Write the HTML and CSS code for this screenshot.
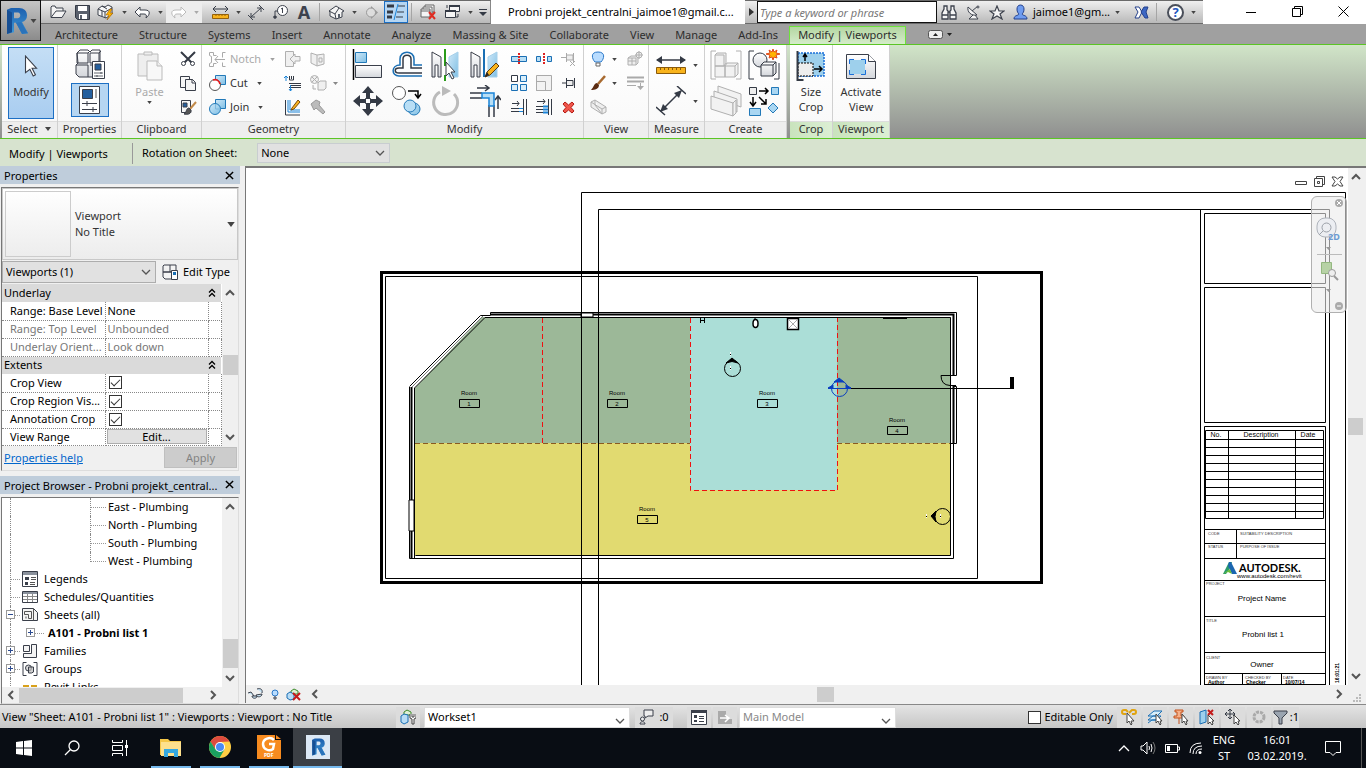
FILE: index.html
```html
<!DOCTYPE html>
<html lang="en">
<head>
    <meta charset="UTF-8">
    <meta name="viewport" content="width=device-width, initial-scale=1.0">
    <title>Probni projekt_centralni</title>
    <link rel="stylesheet" href="styles.css">
</head>
<body>
    <svg class="defs" aria-hidden="true">
        <linearGradient id="blue" x1="0" y1="0" x2="1" y2="1"><stop offset="0" stop-color="#cfe8f8"/><stop offset="1" stop-color="#7fbfe4"/></linearGradient>
        <linearGradient id="grey" x1="0" y1="0" x2="0" y2="1"><stop offset="0" stop-color="#fff"/><stop offset="1" stop-color="#d4d7dc"/></linearGradient>
        <linearGradient id="rlogo" x1="0" y1="0" x2="0" y2="1"><stop offset="0" stop-color="#1c5fae"/><stop offset="1" stop-color="#3f9ad8"/></linearGradient>
        <symbol id="caret" viewBox="0 0 6 4"><path d="M0 0h6L3 4z" fill="#444"/></symbol>
        <symbol id="chev" viewBox="0 0 10 6"><path d="M1 1l4 4 4-4" fill="none" stroke="currentColor" stroke-width="1.3"/></symbol>
        <symbol id="arrow" viewBox="0 0 10 8"><path d="M1 6l4-4 4 4" fill="none" stroke="#555" stroke-width="2"/></symbol>
        <symbol id="cursor" viewBox="0 0 12 20"><path d="M1 1v15l4-3 3 6 2-1-3-6h4z" fill="#fff" stroke="#3a3f4a"/></symbol>
        <symbol id="cross" viewBox="0 0 10 10"><path d="M1 1l8 8M9 1L1 9" stroke="#000" stroke-width="1.6"/></symbol>
        <symbol id="expand" viewBox="0 0 8 10"><path d="M1 4.500l3-3 3 3M1 8.500l3-3 3 3" fill="none" stroke="#000" stroke-width="1.300"/></symbol>
        <symbol id="revit" viewBox="0 0 24 30" preserveAspectRatio="none"><path fill-rule="evenodd" d="M2 3l4-2h8c5 0 8 3 8 8 0 4-2 6-5 7l6 12-6 1-6-12H9v10l-7 2zM9 6v6h4c3 0 3-6 0-6z" fill="url(#rlogo)"/><path d="M2 3l5 3v21l-5 2z" fill="#174f94"/><path d="M11 17l5-1 7 12-6 1z" fill="#2a73bb"/></symbol>
    </svg>

    <header class="header">
        <button class="app-btn" aria-label="Application menu">
            <svg width="24" height="28"><use href="#revit"/></svg>
            <svg width="7" height="4"><use href="#caret"/></svg>
        </button>
        <div class="titlebar">
            <div class="quick-access">
                <button class="qa" aria-label="Open"><svg width="17" height="14" viewBox="0 0 17 14" fill="#f4f4f4" stroke="#3d424d"><path d="M1 12V2l1-1h3l1 2h7v3"/><path d="M1 12.500L6 6h10l-4 6.500z"/></svg></button>
                <button class="qa" aria-label="Save"><svg width="15" height="15" viewBox="0 0 15 15"><path d="M.5.5h14v14h-12l-2-2z" fill="#59606c" stroke="#343a45"/><path d="M3 1h9v5H3zM4 9h8v5H4z" fill="#fff"/><path d="M5 10h2v4H5z" fill="#59606c"/></svg></button>
                <button class="qa" aria-label="Synchronize"><svg width="18" height="17" viewBox="0 0 18 17"><path d="M1 5l4-3 3 1 3-2 4 2v7l-6 4-8-3z" fill="#f6f6f6" stroke="#3d424d"/><path d="M1 5l7 3 7-4M8 8v6M5 2l5 3M5 7v5" stroke="#3d424d" fill="none"/><path d="M13 5l-4 6h3l-2 5 6-7h-3l2-4z" fill="#ffb400" stroke="#9a5a00" stroke-width=".6"/></svg></button>
                <button class="qa-drop" aria-label="Sync options"><svg width="5" height="3"><use href="#caret"/></svg></button>
                <button class="qa" aria-label="Undo"><svg width="17" height="13" viewBox="0 0 17 13"><path d="M6 1L1 6l5 5V8h4c2 0 3 1 2 4 4-3 5-8-1-8H6z" fill="#fff" stroke="#3d424d"/></svg></button>
                <button class="qa-drop" aria-label="Undo list"><svg width="5" height="3"><use href="#caret"/></svg></button>
                <span class="qa-faded">
                    <button class="qa" aria-label="Redo" disabled><svg width="17" height="13" viewBox="0 0 17 13"><path d="M11 1l5 5-5 5V8H7c-2 0-3 1-2 4-4-3-5-8 1-8h5z" fill="#fff" stroke="#bbb"/></svg></button>
                    <button class="qa-drop" aria-label="Redo list" disabled><svg width="5" height="3"><use href="#caret"/></svg></button>
                </span>
                <button class="qa qa-gap" aria-label="Measure"><svg width="17" height="13" viewBox="0 0 17 13"><path d="M1 3h15M4 0L1 3l3 3M13 0l3 3-3 3" stroke="#343a45" fill="none"/><path d="M.5 8.500h16v4H.5z" fill="#f8b31c" stroke="#94610b"/><path d="M4 8v2M7 8v2M10 8v2M13 8v2" stroke="#94610b"/></svg></button>
                <button class="qa-drop" aria-label="Measure options"><svg width="5" height="3"><use href="#caret"/></svg></button>
                <button class="qa" aria-label="Aligned dimension"><svg width="16" height="15" viewBox="0 0 16 15" fill="none" stroke="#3d424d"><path d="M3 12L13 3M3 8v4h4M9 3h4v4M0 10l5 5M11 0l5 5"/></svg></button>
                <button class="qa" aria-label="Tag by category"><svg width="16" height="15" viewBox="0 0 16 15"><circle cx="10.500" cy="5.500" r="5" fill="#fff" stroke="#3d424d"/><path d="M10.500 3v5M9 4l1.500-1M1 12h4M3 14V6h3" stroke="#3d424d" fill="none"/><circle cx="3" cy="12" r="1.500" fill="#3d424d"/></svg></button>
                <button class="qa qa-text" aria-label="Text">A</button>
                <span class="qa-sep"></span>
                <button class="qa" aria-label="Default 3D view"><svg width="17" height="15" viewBox="0 0 17 15"><path d="M1 6l7-5 8 5-2 1v5l-6 2-6-3V7z" fill="#f4f4f4" stroke="#3d424d"/><path d="M1 6l6 3 1 5M7 9l4-6" stroke="#3d424d" fill="none"/><path d="M10 9h2v4h-2z" fill="#59606c"/></svg></button>
                <button class="qa-drop" aria-label="3D options"><svg width="5" height="3"><use href="#caret"/></svg></button>
                <button class="qa" aria-label="Section"><svg width="14" height="13" viewBox="0 0 14 13"><path d="M6 0l7 6.500L6 13z" fill="#999"/><circle cx="6" cy="6.500" r="4.500" fill="#ddd" stroke="#999"/></svg></button>
                <button class="qa qa-on" aria-label="Thin lines"><svg width="18" height="16" viewBox="0 0 18 16"><path d="M0 2h7M0 8h6M0 13h5" stroke="#343a45" stroke-width="3"/><path d="M11 2h7M10 8h7M9 13h7" stroke="#343a45"/><path d="M11 0L7 16" stroke="#1a84d8"/></svg></button>
                <span class="qa-sep"></span>
                <button class="qa" aria-label="Close hidden windows"><svg width="17" height="16" viewBox="0 0 17 16" fill="#f5f5f5" stroke="#666"><path d="M5 1h9v7H5z"/><path d="M3 3h9v7H3z"/><path d="M1 5h9v8H1zM1 7h9"/><path d="M9 8l6 7M15 8l-6 7" stroke="#e02b20" stroke-width="2"/></svg></button>
                <button class="qa" aria-label="Switch windows"><svg width="17" height="16" viewBox="0 0 17 16" fill="#f5f5f5" stroke="#343a45"><path d="M5.500 1.500h10v6h-10z"/><path d="M1.500 6.500h10v7h-10z"/><path d="M5 2h11M1 7h11" stroke-width="2"/><path d="M14 10v3h-2M3 4V1" fill="none"/></svg></button>
                <button class="qa-drop" aria-label="Window list"><svg width="5" height="3"><use href="#caret"/></svg></button>
                <button class="qa-drop qa-more" aria-label="Customize toolbar"><svg width="8" height="7" viewBox="0 0 8 7"><path d="M0 0h8v1H0zM0 3h8L4 7z" fill="#343a45"/></svg></button>
            </div>
            <div class="window-title">Probni projekt_centralni_jaimoe1@gmail.c...</div>
            <div class="infocenter">
                <button class="info-toggle" aria-label="Collapse"><svg width="5" height="8" viewBox="0 0 5 8"><path d="M0 0l5 4-5 4z" fill="#333"/></svg></button>
                <input class="search" type="text" placeholder="Type a keyword or phrase" aria-label="Search">
                <button class="qa" aria-label="Find"><svg width="16" height="15" viewBox="0 0 16 15" fill="#f5f5f5" stroke="#3d424d" stroke-width="1.300"><path d="M3 1h3v4l1 1v8H1V8l2-4zM10 1h3v3l2 4v6H9V6l1-1zM7 7h2M1 10h6M9 10h6"/></svg></button>
                <button class="qa" aria-label="Subscription"><svg width="15" height="15" viewBox="0 0 15 15" fill="#f5f5f5" stroke="#3d424d"><path d="M7 10l-4 4h9l-3-4"/><path d="M2 2c-1 5 3 9 9 8zM6 6l6-5"/><circle cx="12" cy="2" r="1"/></svg></button>
                <button class="qa" aria-label="Favorites"><svg width="16" height="15" viewBox="0 0 16 15"><path d="M8 1l2 5h5l-4 3 2 5-5-3-5 3 2-5-4-3h5z" fill="#f5f5f5" stroke="#3d424d" stroke-width="1.200"/></svg></button>
                <button class="user"><svg width="15" height="16" viewBox="0 0 15 16"><path d="M7.500 1C5 1 4 3 4 5c0 3 1 4 2 5-1 2-5 1-5 5h13c0-4-4-3-5-5 1-1 2-2 2-5 0-2-1-4-3.500-4z" fill="#6f9cf0" stroke="#24418c"/></svg>jaimoe1@gm...<svg width="5" height="3"><use href="#caret"/></svg></button>
                <button class="qa" aria-label="Exchange Apps"><svg width="15" height="13" viewBox="0 0 15 13"><path d="M1 1h4l3 5-3 6H1l3-6z" fill="#fff" stroke="#24418c"/><path d="M14 1h-4L7 6l4 6h3l-2-6z" fill="#3c67c4" stroke="#24418c"/></svg></button>
                <span class="qa-sep"></span>
                <button class="help" aria-label="Help">?</button>
                <button class="qa-drop" aria-label="Help options"><svg width="5" height="3"><use href="#caret"/></svg></button>
            </div>
            <div class="window-btns">
                <button aria-label="Minimize"><svg width="10" height="10" viewBox="0 0 10 10"><path d="M0 5.500h10" stroke="#000"/></svg></button>
                <button aria-label="Restore"><svg width="11" height="11" viewBox="0 0 11 11" fill="none" stroke="#000"><path d="M.5 2.500h8v8h-8zM2.500 2V.5h8v8H9"/></svg></button>
                <button aria-label="Close"><svg width="11" height="11" viewBox="0 0 11 11"><path d="M.5.5l10 10M10.500.5l-10 10" stroke="#000"/></svg></button>
            </div>
        </div>
        <nav class="tabs">
            <a href="#">Architecture</a>
            <a href="#">Structure</a>
            <a href="#">Systems</a>
            <a href="#">Insert</a>
            <a href="#">Annotate</a>
            <a href="#">Analyze</a>
            <a href="#">Massing &amp; Site</a>
            <a href="#">Collaborate</a>
            <a href="#">View</a>
            <a href="#">Manage</a>
            <a href="#">Add-Ins</a>
            <a href="#" class="active">Modify | Viewports</a>
            <button class="ribbon-toggle" aria-label="Minimize ribbon"><svg width="24" height="9" viewBox="0 0 24 9"><rect x=".5" y=".5" width="14" height="8" rx="2" fill="#eee" stroke="#555"/><path d="M5 6l2.500-3L10 6zM19 3h5l-2.500 3z" fill="#222"/></svg></button>
        </nav>
    </header>

    <section class="ribbon">
        <div class="panel w-select">
            <div class="panel-body">
                <button class="big-btn modify-btn"><svg width="14" height="22"><use href="#cursor"/></svg><span>Modify</span></button>
            </div>
            <div class="panel-label">Select <svg width="8" height="4"><use href="#caret"/></svg></div>
        </div>
        <div class="panel w-properties">
            <div class="panel-body col">
                <button class="tool" aria-label="Type properties"><svg width="32" height="32" viewBox="0 0 32 32" stroke="#3a3f4a"><path d="M3 4l3-3h8l2 2 2-2h8v12l-2 2v10l-3 3H5l-3-3V16l2-2z" fill="url(#grey)"/><path d="M2 16h12v12M14 4v10H3V4zM16 4h9v10h-9zM16 16h5M14 4l2-2M25 4l2-2" fill="none"/><path d="M18.500 12.500h12v17h-12z" fill="#fff"/><path d="M21 15h6v6h-6z" fill="#245f9e"/><path d="M20 24h9M20 27h9M27 23v2M23 26v2" stroke-width=".8"/></svg></button>
                <button class="tool tool-on" aria-label="Properties"><svg width="24" height="30" viewBox="0 0 24 30" stroke="#3a3f4a"><path d="M1.500 1.500h20v27h-20z" fill="#fff"/><path d="M4.500 4.500h10v9h-10z" fill="#245f9e"/><path d="M17 4h2v9h-2z" fill="#aaa" stroke="none"/><path d="M4 18.500h15M4 24.500h15M9 16v5M15 22v5"/></svg></button>
            </div>
            <div class="panel-label">Properties</div>
        </div>
        <div class="panel w-clipboard">
            <div class="panel-body">
                <button class="big-btn disabled" disabled><svg width="28" height="32" viewBox="0 0 28 32" fill="#eee" stroke="#bbb"><path d="M2 4h20v22H2z"/><path d="M8 5V2h8v3z"/><path d="M11 11h10l5 5v14H11z" fill="#f8f8f8"/><path d="M21 11v5h5"/></svg><span>Paste</span><svg width="5" height="3"><use href="#caret"/></svg></button>
                <div class="grid-small">
                    <button class="tool" aria-label="Cut to clipboard"><svg width="16" height="16" viewBox="0 0 16 16" stroke="#343a45"><path d="M1 1l11 11M15 1L4 12" stroke-width="2"/><circle cx="3.500" cy="12.500" r="2" fill="#fff"/><circle cx="12.500" cy="12.500" r="2" fill="#fff"/></svg></button>
                    <button class="tool" aria-label="Copy to clipboard"><svg width="16" height="16" viewBox="0 0 16 16" fill="#f6f6f6" stroke="#3a3f4a"><path d="M.5 1.500h9v11h-9z"/><path d="M5.500 4.500h7l3 3v8h-10zM12 4v4h3"/></svg></button>
                    <button class="tool" aria-label="Match type properties"><svg width="17" height="17" viewBox="0 0 17 17" fill="#f6f6f6" stroke="#3a3f4a"><path d="M1.500 1.500h9v12h-9z"/><path d="M3 4h4v4H3z" fill="#245f9e"/><path d="M16 3l-6 7" stroke="#c28a4a" stroke-width="2"/><path d="M4 15c3 1 8 0 7-4l-2-2c-3 0-2 4-5 6z" fill="#555"/></svg></button>
                </div>
            </div>
            <div class="panel-label">Clipboard</div>
        </div>
        <div class="panel w-geometry">
            <div class="panel-body">
                <div class="rows">
                    <button class="row-btn disabled" disabled><svg width="17" height="15" viewBox="0 0 17 15" fill="none" stroke="#aaa"><path d="M.5.5h4v3h3M.5 14.500h4v-3h3M.5.5v3l2 1v6l-2 1v3M16.500.5h-3v5M16.500 14.500h-3v-4M6 7.500h10M9 4L6 7.500 9 11"/></svg>Notch<svg width="5" height="3"><use href="#caret"/></svg></button>
                    <button class="row-btn"><svg width="17" height="16" viewBox="0 0 17 16"><path d="M6.500.5h10v9h-10z" fill="url(#blue)" stroke="#2279b8"/><circle cx="6" cy="10" r="5.500" fill="#fff" stroke="#555"/><path d="M4 5c3-1 6 0 7 4" stroke="#e8191c" stroke-width="1.600" fill="none"/></svg>Cut<svg width="5" height="3"><use href="#caret"/></svg></button>
                    <button class="row-btn"><svg width="17" height="16" viewBox="0 0 17 16" fill="url(#blue)" stroke="#2279b8"><path d="M6.500.5h10v9h-10z"/><circle cx="6" cy="10" r="5.500"/><path d="M6.500 5v5h5" fill="none" stroke="#7fb8dd"/></svg>Join<svg width="5" height="3"><use href="#caret"/></svg></button>
                </div>
                <div class="grid-small">
                    <button class="tool" aria-label="Wall joins" disabled><svg width="17" height="16" viewBox="0 0 17 16" fill="#f0f0f0" stroke="#b0b0b0"><path d="M1.500.5h8v5l-3 3 3 3v4h-8z"/><path d="M16 5.500h-5V3L6 8l5 5v-3h5z"/></svg></button>
                    <button class="tool" aria-label="Beam joins"><svg width="17" height="17" viewBox="0 0 17 17" fill="none" stroke="#343a45"><path d="M5 8.500h12M5 12.500h12M7 10.500h10"/><path d="M5.500 1v4h4V1M7.500 1v3" /><path d="M2 6V1M0 3l2-2 2 2M6.500 10v6M5 14l1.500 2L8 14" stroke="#1a84d8"/></svg></button>
                    <button class="tool" aria-label="Edit joins"><svg width="17" height="17" viewBox="0 0 17 17" fill="none" stroke="#343a45"><path d="M1.500 1v15H16"/><path d="M4 1v12h12M6 1v10h10" stroke="#1a84d8"/><path d="M8 9l6-8 2 2-6 7-3 1z" fill="#f8b31c" stroke="#7a4a0b"/></svg></button>
                </div>
                <div class="grid-small geo-last">
                    <button class="tool" aria-label="Split face" disabled><svg width="15" height="15" viewBox="0 0 15 15" fill="#f0f0f0" stroke="#b0b0b0"><path d="M1 1l6 2 7-1v10l-7 2-6-3zM7 3v11M9 6h3v4H9z"/></svg></button>
                    <button class="tool" aria-label="Paint" disabled><svg width="30" height="16" viewBox="0 0 30 16" fill="#f0f0f0" stroke="#b0b0b0"><circle cx="4.500" cy="4.500" r="4"/><path d="M2 2l5 5M7 2L2 7M8 8l2-2h6v7l-2 2H8zM3 10v4h3"/><path d="M23 7h5l-2.500 3z" fill="#888" stroke="none"/></svg></button>
                    <button class="tool" aria-label="Demolish"><svg width="16" height="16" viewBox="0 0 16 16" fill="#bbb" stroke="#999"><path d="M1 5l5-4 4 2-1 3 6 7-2 2-7-6-2 2z"/></svg></button>
                </div>
            </div>
            <div class="panel-label">Geometry</div>
        </div>
        <div class="panel w-modify">
            <div class="panel-body">
                <div class="grid-big">
                    <button class="tool" aria-label="Align"><svg width="32" height="32" viewBox="0 0 32 32"><path d="M1.500 0v31" stroke="#000" stroke-width="1.500"/><path d="M3.500 3.500h11v10h-11z" fill="url(#blue)" stroke="#2279b8"/><path d="M3.500 16.500h26v12h-26z" fill="url(#grey)" stroke="#3a3f4a"/></svg></button>
                    <button class="tool" aria-label="Offset"><svg width="32" height="32" viewBox="0 0 32 32" fill="none"><path d="M31 16h-8V10c0-9-14-9-14 0v6C0 16 0 27 8 27h23" stroke="#1a6fb4" stroke-width="1.500"/><path d="M31 19h-11V10c0-5-8-5-8 0v9H8c-5 0-5 5 0 5h23" stroke="#343a45" stroke-width="1.500"/></svg></button>
                    <button class="tool" aria-label="Mirror pick axis"><svg width="32" height="32" viewBox="0 0 32 32"><path d="M2 3l9 5v20H8V16H5v12H2z" fill="url(#grey)" stroke="#3a3f4a"/><path d="M28 3l-9 5v20h9z" fill="url(#blue)" stroke="#a6d0ea"/><path d="M15 0v32" stroke="#2a9c1a" stroke-width="2" stroke-dasharray="17 9 6"/><path d="M16 13v14l3-3 3 6 2-1-3-6h4z" fill="#fff" stroke="#3a3f4a"/></svg></button>
                    <button class="tool" aria-label="Mirror draw axis"><svg width="32" height="32" viewBox="0 0 32 32"><path d="M2 3l9 5v20H8V16H5v12H2z" fill="url(#grey)" stroke="#3a3f4a"/><path d="M28 3l-9 5v20h9z" fill="url(#blue)" stroke="#a6d0ea"/><path d="M15 0v28" stroke="#1a6fb4" stroke-width="2"/><path d="M16 28l2-5 9-9 3 3-9 9z" fill="#f8b31c" stroke="#5d3a10"/><path d="M16 28l2-5 2 3z" fill="#222"/></svg></button>
                    <button class="tool" aria-label="Move"><svg width="32" height="32" viewBox="0 0 32 32" fill="#343a45"><path d="M16 1l6 7h-4v5h-4V8h-4zM16 31l6-7h-4v-5h-4v5h-4zM1 16l7-6v4h5v4H8v4zM31 16l-7-6v4h-5v4h5v4z"/><path d="M13.500 13.500h5v5h-5z" fill="#fff" stroke="#343a45"/></svg></button>
                    <button class="tool" aria-label="Copy"><svg width="32" height="32" viewBox="0 0 32 32"><circle cx="8" cy="8" r="6.500" fill="#fff" stroke="#555"/><path d="M17 6h10v6M24 9l3 4 3-4" fill="none" stroke="#000" stroke-width="1.500"/><circle cx="23" cy="24" r="6" fill="url(#blue)" stroke="#2279b8"/><circle cx="19" cy="21" r="6" fill="#b8def5" stroke="#2279b8"/></svg></button>
                    <button class="tool" aria-label="Rotate" disabled><svg width="32" height="32" viewBox="0 0 32 32"><path d="M10 7a12 12 0 1 0 14 2" fill="none" stroke="#bbb" stroke-width="3"/><path d="M12 1l9 5-9 5z" fill="#bbb"/></svg></button>
                    <button class="tool" aria-label="Trim to corner"><svg width="32" height="32" viewBox="0 0 32 32" fill="none" stroke="#343a45" stroke-width="1.500"><path d="M8 3h12M16 0l4 3-4 3M29 24V12M26 15l3-4 3 4M1 8h12M1 13h12M20 20v12M25 20v12"/><path d="M13 8h12v13h-5v-8h-7z" fill="#b8def5" stroke="#1a84d8"/></svg></button>
                </div>
                <div class="grid-three">
                    <button class="tool" aria-label="Split element"><svg width="16" height="12" viewBox="0 0 16 12"><path d="M.5 3.500h15v5H.5z" fill="#b8def5" stroke="#1a6fb4"/><path d="M8 0v12" stroke="#d22" stroke-width="2" stroke-dasharray="2 1"/></svg></button>
                    <button class="tool" aria-label="Split with gap"><svg width="16" height="12" viewBox="0 0 16 12"><path d="M.5 3.500h4v5h-4zM11.500 3.500h4v5h-4z" fill="#b8def5" stroke="#1a6fb4"/><path d="M8 0v12" stroke="#d22" stroke-width="2" stroke-dasharray="2 1"/></svg></button>
                    <button class="tool" aria-label="Unpin" disabled><svg width="16" height="16" viewBox="0 0 16 16" fill="#eee" stroke="#aaa"><path d="M0 6.500h5M5.500 2v9M6 4h6v5H6M12.500 2v9M9 10l5 5M14 10l-5 5"/></svg></button>
                    <button class="tool" aria-label="Array"><svg width="16" height="16" viewBox="0 0 16 16" fill="#d8eefa" stroke="#1a6fb4"><path d="M.5.5h6v6h-6z" fill="#fff" stroke="#343a45"/><path d="M9.500.5h6v6h-6zM.5 9.500h6v6h-6zM9.500 9.500h6v6h-6z"/></svg></button>
                    <button class="tool" aria-label="Scale" disabled><svg width="16" height="16" viewBox="0 0 16 16" fill="#f2f2f2" stroke="#aaa"><path d="M.5.5h15v15h-15zM.5 6.500h9v9h-9z"/></svg></button>
                    <button class="tool" aria-label="Pin"><svg width="14" height="12" viewBox="0 0 14 12" fill="#eee" stroke="#343a45"><path d="M0 6h4M4.500 1v10M5 3.500h6v5H5M12.500 1v10"/></svg></button>
                    <button class="tool" aria-label="Trim single"><svg width="16" height="16" viewBox="0 0 16 16" fill="none" stroke="#343a45"><path d="M1 4.500h7M6 2l2 2.500L6 7M0 9.500h8M0 12.500h8M12.500 0v16M15.500 0v16"/><path d="M8 9.500h4M8 12.500h4" stroke="#1a84d8"/></svg></button>
                    <button class="tool" aria-label="Trim multiple"><svg width="16" height="16" viewBox="0 0 16 16" fill="none" stroke="#343a45"><path d="M1 2.500h8M7 0l2 2.500L7 5M0 7.500h9M0 10.500h9M0 13.500h9M12.500 0v16M15.500 0v16"/><path d="M7 7.500h5M7 10.500h5M7 13.500h5" stroke="#1a84d8" stroke-width="2"/></svg></button>
                    <button class="tool" aria-label="Delete"><svg width="13" height="13" viewBox="0 0 13 13"><path d="M1 3l2-2 3.500 3L10 1l2 2-3 3.500 3 3.500-2 2-3.500-3L3 12l-2-2 3-3.500z" fill="#f0564b" stroke="#b51b14"/></svg></button>
                </div>
            </div>
            <div class="panel-label">Modify</div>
        </div>
        <div class="panel w-view">
            <div class="panel-body">
                <div class="rows icons-only">
                    <button class="row-btn" aria-label="Hide in view"><svg width="16" height="17" viewBox="0 0 16 17"><path d="M8 1C0 1 2 8 5 11h6c3-3 5-10-3-10z" fill="#b8dcff" stroke="#2b78c8"/><path d="M6 12h4v3H6z" fill="#fff" stroke="#666"/></svg><svg width="5" height="3"><use href="#caret"/></svg></button>
                    <button class="row-btn" aria-label="Override graphics"><svg width="16" height="16" viewBox="0 0 16 16"><path d="M15 1L8 9" stroke="#a86a30" stroke-width="2.500"/><path d="M1 15c4 0 8-1 8-5L7 8C4 8 4 12 1 15z" fill="#5b2b12"/></svg><svg width="5" height="3"><use href="#caret"/></svg></button>
                    <button class="row-btn" aria-label="Selection box" disabled><svg width="17" height="16" viewBox="0 0 17 16" fill="#eee" stroke="#b0b0b0"><path d="M1 3l4-2 11 7v5l-4 2L1 8zM1 3l11 7v5M5 1v5l7 9M12 10l4-2"/></svg></button>
                </div>
                <div class="grid-small">
                    <button class="tool" aria-label="Displace" disabled><svg width="16" height="16" viewBox="0 0 16 16" fill="#eee" stroke="#b0b0b0"><path d="M1 7l3-2h7v7l-2 2H1zM1 7h8v7M5 7v7M1 10h8"/><circle cx="12" cy="4" r="3"/><path d="M12 0v8M8 4h8"/></svg></button>
                    <button class="tool" aria-label="Linework" disabled><svg width="17" height="14" viewBox="0 0 17 14" stroke="#aaa"><path d="M0 1.500h17M0 5.500h17" stroke-width="2"/><path d="M0 9.500h9M13.500 7v5"/><path d="M10 10h7l-3.500 4z" fill="#aaa" stroke="none"/></svg></button>
                </div>
            </div>
            <div class="panel-label">View</div>
        </div>
        <div class="panel w-measure">
            <div class="panel-body col">
                <button class="wide-tool" aria-label="Measure between"><svg width="30" height="20" viewBox="0 0 30 20"><path d="M1 5h28" stroke="#343a45" stroke-width="1.500"/><path d="M0 5l6-4v8zM30 5l-6-4v8z" fill="#343a45"/><path d="M.5 12.500h29v6H.5z" fill="#f8b31c" stroke="#8a5a0a"/><path d="M4.500 13v2M8.500 13v2M12.500 13v2M16.500 13v2M20.500 13v2M24.500 13v2" stroke="#8a5a0a"/></svg><svg width="5" height="3"><use href="#caret"/></svg></button>
                <button class="wide-tool" aria-label="Aligned"><svg width="30" height="30" viewBox="0 0 30 30"><path d="M5 25L25 5M0 21l9 8M21 0l9 8" stroke="#343a45" stroke-width="1.500"/><path d="M4 26l3-8 5 5zM26 4l-8 3 5 5z" fill="#343a45"/></svg><svg width="5" height="3"><use href="#caret"/></svg></button>
            </div>
            <div class="panel-label">Measure</div>
        </div>
        <div class="panel w-create">
            <div class="panel-body">
                <div class="grid-create">
                    <button class="tool" aria-label="Create assembly" disabled><svg width="32" height="32" viewBox="0 0 32 32" fill="#f2f2f2" stroke="#b0b0b0"><path d="M6 2H1v28h5M26 2h5v28h-5" fill="none"/><path d="M5 17V6l2-2h9v10l-2 3zM5 17h10v11H5zM15 17l2-3h11v11l-3 3H15zM15 17h10v11M5 6h9v11M25 17l3-3"/></svg></button>
                    <button class="tool" aria-label="Create group"><svg width="32" height="32" viewBox="0 0 32 32" fill="url(#grey)" stroke="#343a45"><path d="M6 2H1v28h5M26 30h5V14" fill="none"/><circle cx="12" cy="11" r="7"/><path d="M13 16l3-3h12v11l-3 3H13zM13 16h12v11M25 16l3-3"/><path d="M25 0l1 3 3-2-1 3 4 1-4 1 1 3-3-1-1 3-1-3-3 1 1-3-4-1 4-1-1-3 3 2z" fill="#ffb400" stroke="#e0491a"/></svg></button>
                    <button class="tool" aria-label="Create parts" disabled><svg width="32" height="32" viewBox="0 0 32 32" fill="#f2f2f2" stroke="#b0b0b0"><path d="M8 1l23 8v13l-23-8z"/><path d="M4 6l23 8v13L4 19z"/><path d="M1 11l22 7v13L1 24z"/><path d="M23 18l3-3v13l-3 3z"/></svg></button>
                    <button class="tool" aria-label="Create similar"><svg width="32" height="32" viewBox="0 0 32 32"><path d="M1.500 2.500h7v7h-7z" fill="#eee" stroke="#343a45"/><path d="M23.500 2.500h7v7h-7zM1.500 23.500h11v7h-11zM25 18l5 5-5 5-5-5z" fill="#a9d6f2" stroke="#2279b8"/><path d="M11 6h9M17 3l3 3-3 3M5 12v8M2 17l3 4 3-4M11 12l7 7M18 14v5h-5" fill="none" stroke="#000" stroke-width="1.500"/></svg></button>
                </div>
            </div>
            <div class="panel-label">Create</div>
        </div>
        <div class="panel w-crop context">
            <div class="panel-body">
                <button class="big-btn"><svg width="30" height="32" viewBox="0 0 30 30"><path d="M2 2h26v23H2z" fill="#9ed0ec" stroke="#1a6fd8" stroke-width="1.500" stroke-dasharray="2 1"/><path d="M2 12h15v13H2z" fill="#eee" stroke="#000" stroke-dasharray="2 1"/><path d="M1.500 0v29h6" stroke="#343a45" stroke-width="2" fill="none"/><path d="M9 10V4M7 6l2-3 2 3M18 18h8M23 15l3 3-3 3" fill="none" stroke="#000" stroke-width="1.500"/></svg><span>Size<br>Crop</span></button>
            </div>
            <div class="panel-label">Crop</div>
        </div>
        <div class="panel w-viewport context">
            <div class="panel-body">
                <button class="big-btn"><svg width="32" height="32" viewBox="0 0 32 30"><path d="M1.500 3.500h22l7 7v17h-29z" fill="url(#grey)" stroke="#3a3f4a"/><path d="M23.500 3.500v7h7" fill="#fff" stroke="#3a3f4a"/><path d="M5 9h15v14H5z" fill="#9ed0ec"/><path d="M4.500 13V8.500H9M16 8.500h4.500V13M20.500 19v4.500H16M9 23.500H4.500V19" fill="none" stroke="#1a6fd8"/></svg><span>Activate<br>View</span></button>
            </div>
            <div class="panel-label">Viewport</div>
        </div>
    </section>

    <section class="options-bar">
        <span class="mode">Modify | Viewports</span>
        <label for="rotation">Rotation on Sheet:</label>
        <span class="combo rotation">
            <select id="rotation"><option>None</option></select>
            <svg width="10" height="6"><use href="#chev"/></svg>
        </span>
    </section>

    <main class="workspace">
        <aside class="side">
            <section class="palette properties">
                <h2 class="palette-title">Properties<button aria-label="Close properties"><svg width="9" height="9"><use href="#cross"/></svg></button></h2>
                <div class="palette-body">
                    <button class="type-selector">
                        <span class="thumb"></span>
                        <span class="type-name">Viewport<br>No Title</span>
                        <svg width="8" height="5"><use href="#caret"/></svg>
                    </button>
                    <div class="filter">
                        <span class="combo">
                            <select aria-label="Properties filter"><option>Viewports (1)</option></select>
                            <svg width="10" height="6"><use href="#chev"/></svg>
                        </span>
                        <button class="edit-type"><svg width="17" height="16" viewBox="0 0 17 16" fill="#f4f4f4" stroke="#3a3f4a"><path d="M1 2l1-1h12v9M1 2v11l2 2h7V8H1M8 1v7M1 8h13"/><path d="M9.500 6.500h6v9h-6z" fill="#fff"/><path d="M11 8h3v3h-3z" fill="#1a6fb4" stroke="none"/></svg>Edit Type</button>
                    </div>
                    <div class="scroll-area">
                        <table class="props">
                            <colgroup><col class="c-name"><col class="c-value"><col class="c-btn"></colgroup>
                            <tr class="group"><th colspan="2">Underlay</th><th><svg width="8" height="10"><use href="#expand"/></svg></th></tr>
                            <tr><td>Range: Base Level</td><td>None</td><td></td></tr>
                            <tr class="dim"><td>Range: Top Level</td><td>Unbounded</td><td></td></tr>
                            <tr class="dim"><td>Underlay Orient...</td><td>Look down</td><td></td></tr>
                            <tr class="group"><th colspan="2">Extents</th><th><svg width="8" height="10"><use href="#expand"/></svg></th></tr>
                            <tr><td><label for="crop-view">Crop View</label></td><td><input type="checkbox" id="crop-view" checked></td><td></td></tr>
                            <tr><td><label for="crop-region">Crop Region Vis...</label></td><td><input type="checkbox" id="crop-region" checked></td><td></td></tr>
                            <tr><td><label for="ann-crop">Annotation Crop</label></td><td><input type="checkbox" id="ann-crop" checked></td><td></td></tr>
                            <tr class="range"><td>View Range</td><td class="with-btn"><button class="edit-btn">Edit...</button></td><td></td></tr>
                        </table>
                        <div class="vscroll">
                            <svg width="10" height="8"><use href="#arrow"/></svg>
                            <span class="vthumb props-thumb"></span>
                            <svg class="flip" width="10" height="8"><use href="#arrow"/></svg>
                        </div>
                    </div>
                    <div class="props-footer">
                        <a href="#">Properties help</a>
                        <button disabled>Apply</button>
                    </div>
                </div>
            </section>

            <section class="palette browser">
                <h2 class="palette-title">Project Browser - Probni projekt_central...<button aria-label="Close browser"><svg width="9" height="9"><use href="#cross"/></svg></button></h2>
                <div class="palette-body">
                    <div class="scroll-area">
                        <ul class="tree">
                            <li class="leaf">East - Plumbing</li>
                            <li class="leaf">North - Plumbing</li>
                            <li class="leaf">South - Plumbing</li>
                            <li class="leaf last">West - Plumbing</li>
                            <li class="top"><i></i><svg width="16" height="16" viewBox="0 0 16 16"><path d="M.5.500h15v15H.5z" fill="#fff" stroke="#3a3f4a"/><path d="M1 1h14v3H1z" fill="#8a919c"/><path d="M3 6h4v3H3zM3 11h3v3H3z" fill="#3a3f4a"/><path d="M9 6.500h5M9 8.500h5M8 11.500h5M8 13.500h5" stroke="#555"/></svg>Legends</li>
                            <li class="top"><i></i><svg width="16" height="12" viewBox="0 0 16 12"><path d="M.5.500h15v11H.5z" fill="#fff" stroke="#3a3f4a"/><path d="M1 1h14v2H1z" fill="#8a919c"/><path d="M1 5.500h14M1 8.500h14M5.500 3v8M10.500 3v8" stroke="#888"/></svg>Schedules/Quantities</li>
                            <li class="top"><i class="minus"></i><svg width="16" height="13" viewBox="0 0 16 13"><path d="M.5.500h11l4 4v8H.5z" fill="#f4f4f4" stroke="#3a3f4a"/><path d="M2.500 3.500h7v7h-3v-4h-4zM4 8.500v2M11.500.500v12" fill="none" stroke="#555"/></svg>Sheets (all)</li>
                            <li class="sheet"><i class="plus"></i>A101 - Probni list 1</li>
                            <li class="top"><i class="plus"></i><svg width="14" height="14" viewBox="0 0 14 14" fill="#f4f4f4" stroke="#3a3f4a"><path d="M.5 1.500h6v6h-6zM8.500.500h5v13H.5v-4h8z"/></svg>Families</li>
                            <li class="top"><i class="plus"></i><svg width="15" height="14" viewBox="0 0 15 14" fill="none" stroke="#3a3f4a"><path d="M4 .5H.5v13H4M11 .5h3.500v13H11"/><circle cx="6" cy="6" r="3" fill="#ddd"/><path d="M6 5h5v5l-2 1H6z" fill="#bbb" fill-opacity=".7"/></svg>Groups</li>
                            <li class="top"><i></i><svg width="14" height="8" viewBox="0 0 14 8" fill="none" stroke="#d9a11b" stroke-width="2"><path d="M1 3h4v4H1zM9 3h4v4H9zM4 5h6"/></svg>Revit Links</li>
                        </ul>
                        <div class="vscroll">
                            <svg width="10" height="8"><use href="#arrow"/></svg>
                            <span class="vthumb tree-thumb"></span>
                            <svg class="flip" width="10" height="8"><use href="#arrow"/></svg>
                        </div>
                    </div>
                    <div class="hscroll">
                        <svg class="left" width="10" height="8"><use href="#arrow"/></svg>
                        <span class="hthumb"></span>
                        <svg class="right" width="10" height="8"><use href="#arrow"/></svg>
                    </div>
                </div>
            </section>
        </aside>

        <section class="view">
            <div class="canvas">
                <svg class="sheet-drawing" viewBox="246 168 1102 517" preserveAspectRatio="xMinYMin slice">
                    <!-- rooms -->
                    <path d="M482 317H951V443H415V388z" fill="#9cb898"/>
                    <path d="M415 443H951V556H415z" fill="#e1da70"/>
                    <path d="M690 317H837V490H690z" fill="#abded7"/>
                    <g class="boundary">
                        <path d="M542.500 318V443M690.500 318V490.500H837.500V318"/>
                        <path d="M415 443.500H690M837 443.500H951" stroke="#8a5a20"/>
                    </g>
                    <!-- walls -->
                    <g class="line">
                        <path d="M490.500 315.500V312.500H956.500V375.500H941M954 386.500H956.500V443.500H951M485 317.500H950.500V555.500H415.500M953.500 443V558.500H409.500V387"/>
                        <path d="M490 315.500H480.500L409.500 386.500M485 317.500L414.500 388V558"/>
                        <path d="M483 316L412 387" stroke="#777"/>
                        <path d="M950.500 385.500H956M941 375.500Q941 385 950 385.500M883 318.500H907"/>
                        <path d="M490 314.500H953.500V375M953.500 386V443M411.500 387V558" stroke-width="2"/>
                    </g>
                    <path d="M581 313h12v4h-12zM409 500h5v31h-5z" fill="#fff" stroke="#000"/>
                    <!-- fixtures -->
                    <g class="line">
                        <path d="M700.500 318v5M704.500 318v5M700 320.500h5M755 318v2"/>
                        <ellipse cx="755.500" cy="323.500" rx="2.500" ry="4" fill="#fff" stroke-width="1.500"/>
                        <path d="M787.500 318.500h11v11h-11z" fill="#fff" stroke-width="1.500"/>
                        <path d="M789 320l8 8M797 320l-8 8" stroke="#aaa"/>
                    </g>
                    <!-- elevation and section marks -->
                    <g class="line">
                        <circle cx="732.500" cy="368.500" r="8"/>
                        <path d="M726 363l6-5 6 5q-6-3-12 0z" fill="#000"/>
                        <circle cx="942.500" cy="516.500" r="8"/>
                        <path d="M936 511l-5 5 5 6q-2-5 0-11z" fill="#000"/>
                        <path d="M850 388.500h163"/>
                        <path d="M1010 377h4v12h-4z" fill="#000" stroke="none"/>
                    </g>
                    <path d="M730.500 352v4M730.500 366v4M926.500 514v4M940.500 514v4" stroke="#fff"/>
                    <path d="M730.500 354v1M730.500 368v1M926.500 516v1M940.500 516v1" stroke="#000"/>
                    <g stroke="#0b3fc0" fill="none">
                        <circle cx="839.500" cy="388.500" r="8"/>
                        <path d="M828 388.500h23"/>
                        <path d="M834 382l5-4 5 4zM828 388l5-3v3zM851 388l-5-3v3z" fill="#0b3fc0"/>
                    </g>
                    <g class="room-tag">
                        <path d="M459.500 399.500h20v8h-20zM607.500 399.500h20v8h-20zM757.500 399.500h20v8h-20zM887.500 426.500h20v8h-20zM637.500 515.500h20v8h-20z"/>
                        <text x="469" y="395">Room</text><text x="469" y="406">1</text>
                        <text x="617" y="395">Room</text><text x="617" y="406">2</text>
                        <text x="767" y="395">Room</text><text x="767" y="406">3</text>
                        <text x="897" y="422">Room</text><text x="897" y="433">4</text>
                        <text x="647" y="511">Room</text><text x="647" y="522">5</text>
                    </g>
                    <!-- crop region -->
                    <path d="M381.500 272.500H1041.500V582.500H381.500z" fill="none" stroke="#000" stroke-width="3"/>
                    <path class="line" d="M385.500 276.500H977.500V578.500H385.500z"/>
                    <!-- sheet frame and title block -->
                    <g class="line">
                        <path d="M581.500 686V192.500H1345.500V686M598.500 686V209.500H1329.500V686M1200.500 209V686"/>
                        <path d="M1204.500 213.500h121v70h-121zM1204.500 287.500h121v135h-121zM1204.500 686V426.500H1325.500V686"/>
                        <path d="M1205.500 430.500h118v88h-118zM1228.500 430v88M1295.500 430v88M1205 439.500h118M1205 447.500h118M1205 455.500h118M1205 463.500h118M1205 471.500h118M1205 479.500h118M1205 487.500h118M1205 495.500h118M1205 503.500h118M1205 511.500h118"/>
                        <path d="M1204 529.500h121M1204 543.500h121M1236.500 529v29M1204 558.500h121M1204 580.500h121M1204 616.500h121M1204 652.500h121M1204 673.500h121M1242.500 673v11M1281.500 673v11M1204 684.500h121"/>
                    </g>
                    <g class="block-head">
                        <text x="1216" y="437">No.</text>
                        <text x="1261" y="437">Description</text>
                        <text x="1308" y="437">Date</text>
                    </g>
                    <g class="block-tiny">
                        <text x="1208" y="535">CODE</text><text x="1240" y="535">SUITABILITY DESCRIPTION</text>
                        <text x="1208" y="548">STATUS</text><text x="1240" y="548">PURPOSE OF ISSUE</text>
                        <text x="1206" y="585">PROJECT</text><text x="1206" y="622">TITLE</text>
                        <text x="1206" y="659">CLIENT</text><text x="1206" y="679">DRAWN BY</text>
                        <text x="1245" y="679">CHECKED BY</text><text x="1283" y="679">DATE</text>
                    </g>
                    <g class="block-sign">
                        <text x="1208" y="684">Author</text><text x="1246" y="684">Checker</text><text x="1285" y="684">10/07/14</text>
                        <text transform="rotate(-90 1339 683)" x="1339" y="683">16:01:21</text>
                    </g>
                    <path d="M1223 574l6-12h3l-3 8-3 4z" fill="#2a9a6b"/>
                    <path d="M1229 562h2l6 12h-5l-4-8z" fill="#1b66b0"/>
                    <path d="M1223 574l7-5 2 5-4-2z" fill="#6cbf3c"/>
                    <text class="brand" x="1239" y="572">AUTODESK.</text>
                    <text class="brand-url" x="1237" y="578">www.autodesk.com/revit</text>
                    <g class="block-text">
                        <text x="1262" y="601">Project Name</text>
                        <text x="1263" y="637">Probni list 1</text>
                        <text x="1262" y="667">Owner</text>
                    </g>
                </svg>
                <div class="mdi-btns">
                    <button aria-label="Minimize view"><svg width="13" height="13" viewBox="0 0 13 13"><path d="M.5 6.500h11v3H.5z" fill="#fff" stroke="#444"/></svg></button>
                    <button aria-label="Restore view"><svg width="13" height="13" viewBox="0 0 13 13" fill="#fff" stroke="#444"><path d="M3.500 1.500h8v8h-8z"/><path d="M1.500 3.500h8v8h-8zM4.500 6.500h2v2h-2z"/></svg></button>
                    <button aria-label="Close view"><svg width="13" height="13" viewBox="0 0 13 13"><path d="M1 2h3l2.500 2L9 2h3L9 6.500l3 4.500H9L6.500 9 4 11H1l3-4.500z" fill="#fff" stroke="#444"/></svg></button>
                </div>
                <div class="navbar">
                    <svg width="34" height="115" viewBox="0 0 34 115">
                        <circle cx="27" cy="6" r="4" fill="#aaa"/><path d="M25 4l4 4M29 4l-4 4" stroke="#fff"/>
                        <rect x="5" y="21" width="19" height="19" rx="8" fill="#eceef2" stroke="#aeb3bb"/><circle cx="14.500" cy="30.500" r="4.500" fill="none" stroke="#9ba0a8"/><path d="M11 34l-4 4" stroke="#9ba0a8"/>
                        <text x="16" y="43" class="nav-2d">2D</text>
                        <path d="M14 50h5l-2.500 3zM14 92h5l-2.500 3z" fill="#999"/>
                        <path d="M5 57.500h25" stroke="#bbb"/>
                        <path d="M9.500 65.500h10v11h-10z" fill="#b7d2a6" stroke="#94b880"/>
                        <circle cx="20" cy="76" r="3.500" fill="#eee" stroke="#999"/><path d="M22 79l4 4" stroke="#999" stroke-width="2"/>
                        <circle cx="27" cy="109" r="4" fill="#aaa"/><path d="M25 109h4" stroke="#fff"/>
                    </svg>
                </div>
            </div>
            <div class="vscroll view-vscroll">
                <svg width="10" height="8"><use href="#arrow"/></svg>
                <span class="vthumb view-thumb"></span>
                <svg class="flip" width="10" height="8"><use href="#arrow"/></svg>
            </div>
            <div class="view-controls">
                <button aria-label="Temporary hide"><svg width="17" height="12" viewBox="0 0 17 12" fill="#c8e4f4" stroke="#3a3f4a"><path d="M1 5l3-1 3 4M5 8c0 3 5 3 5 0zM9 7c1 3 6 2 6-1zM10 1c3-1 6 0 5 4" /></svg></button>
                <button aria-label="Reveal hidden"><svg width="8" height="11" viewBox="0 0 8 11"><circle cx="4" cy="4" r="3" fill="#b8dcff" stroke="#2b78c8"/><path d="M3 8h2v2H3z" stroke="#3a3f4a" fill="#fff"/></svg></button>
                <button aria-label="Worksharing display"><svg width="15" height="13" viewBox="0 0 15 13"><path d="M5 3l3-2 4 2v3H5z" fill="#dff0d4" stroke="#3c8a2a"/><path d="M1 6l3-2 4 2v5l-4 1-3-2z" fill="#b8dcf5" stroke="#1a6fb4"/><path d="M7 5l7 7M14 5l-7 7" stroke="#c41b1b" stroke-width="2"/></svg></button>
                <svg class="left" width="10" height="8"><use href="#arrow"/></svg>
                <span class="view-hthumb"></span>
                <svg class="right" width="10" height="8"><use href="#arrow"/></svg>
            </div>
            <svg class="grip" width="9" height="9" viewBox="0 0 9 9"><path d="M6 0h2v2H6zM3 3h2v2H3zM6 3h2v2H6zM0 6h2v2H0zM3 6h2v2H3zM6 6h2v2H6z" fill="#bbb"/></svg>
        </section>
    </main>

    <footer class="statusbar">
        <span class="status-text">View "Sheet: A101 - Probni list 1" : Viewports : Viewport : No Title</span>
        <button class="sb" aria-label="Worksets"><svg width="16" height="16" viewBox="0 0 16 16"><path d="M4 3l3-2 4 2v3H4z" fill="#dff0d4" stroke="#3c8a2a"/><path d="M1 7l3-2 4 1v7l-4 2-3-2z" fill="#b8dcf5" stroke="#1a6fb4"/><path d="M10 5v4l2 1v5h2v-5l2-1V5M12 5v3h2V5" fill="#fff" stroke="#444"/></svg></button>
        <span class="combo workset">
            <select aria-label="Active workset"><option>Workset1</option></select>
            <svg width="10" height="6"><use href="#chev"/></svg>
        </span>
        <button class="sb requests"><svg width="15" height="16" viewBox="0 0 15 16" fill="#eee" stroke="#3a3f4a"><path d="M5 1h9v6H9l-3 2V7H5z"/><circle cx="3.500" cy="10" r="2"/><path d="M1 15c0-3 5-3 5 0z"/></svg>:0</button>
        <button class="sb" aria-label="Design options"><svg width="16" height="15" viewBox="0 0 16 15"><path d="M.5.500h15v14H.5z" fill="#fff" stroke="#3a3f4a"/><path d="M0 0h16v3H0zM3 5h3v3H3zM3 10h3v2H3zM8 6h5v1H8zM8 8h5v1H8zM8 11h5v1H8z" fill="#3a3f4a"/></svg></button>
        <button class="sb" aria-label="Add to set" disabled><svg width="16" height="15" viewBox="0 0 16 15"><path d="M1 1h8v13H1zM9 9h6v5H9z" fill="#aaa"/><path d="M3 8h8M8 5l4 3-4 4" stroke="#fff" stroke-width="1.500" fill="none"/></svg></button>
        <span class="combo model">
            <select aria-label="Active option" disabled><option>Main Model</option></select>
            <svg width="10" height="6"><use href="#chev"/></svg>
        </span>
        <label class="editable"><input type="checkbox"> Editable Only</label>
        <div class="sel-tools">
            <button class="sb" aria-label="Select links"><svg width="16" height="16" viewBox="0 0 16 16"><path d="M5 5H3a2 2 0 0 1 0-4h2l2 2M11 5h2a2 2 0 0 0 0-4h-2L8 4" fill="none" stroke="#e0a412" stroke-width="2"/><path d="M6 4v10l2-2 2 4 1-1-1-3h3z" fill="#fff" stroke="#444"/></svg></button>
            <button class="sb" aria-label="Select underlay"><svg width="16" height="16" viewBox="0 0 16 16"><path d="M1 7l6-5h8l-5 5zM1 11l5-4h8l-4 4zM1 14l4-3h6" fill="#d8eefa" stroke="#1a6fb4"/><path d="M9 5v9l2-2 2 4 1-1-1-3h2z" fill="#fff" stroke="#444"/></svg></button>
            <button class="sb" aria-label="Select pinned"><svg width="16" height="16" viewBox="0 0 16 16"><path d="M2 1h8v2H8v4h3v2H1V7h3V3H2zM6 9v6" fill="#f6b08a" stroke="#c4501b"/><path d="M9 5v9l2-2 2 4 1-1-1-3h2z" fill="#fff" stroke="#444"/></svg></button>
            <button class="sb" aria-label="Select by face"><svg width="16" height="16" viewBox="0 0 16 16"><path d="M1 3l6-2v12l-6 2z" fill="#9ed0ec" stroke="#1a6fb4"/><path d="M9 1l5 5M14 1L9 6" stroke="#c41b1b" stroke-width="2"/><path d="M9 6v9l2-2 2 3 1-1-1-3h2z" fill="#fff" stroke="#444"/></svg></button>
            <button class="sb" aria-label="Drag elements"><svg width="16" height="16" viewBox="0 0 16 16"><path d="M5 0v10M0 5h10M3 2l2-2 2 2M3 8l2 2 2-2M2 3L0 5l2 2M8 3l2 2-2 2" fill="none" stroke="#343a45"/><path d="M9 6v9l2-2 2 3 1-1-1-3h2z" fill="#fff" stroke="#444"/></svg></button>
            <button class="sb" aria-label="Background processes"><svg width="16" height="16" viewBox="0 0 16 16"><circle cx="8" cy="8" r="5" fill="none" stroke="#aaa" stroke-width="3" stroke-dasharray="3 1"/></svg></button>
            <button class="sb filter-btn"><svg width="15" height="15" viewBox="0 0 15 15"><path d="M1 1h13v2L9 8v6H6V8L1 3z" fill="#9aa4b0" stroke="#3a3f4a"/></svg>:1</button>
        </div>
    </footer>

    <nav class="taskbar">
        <button aria-label="Start"><svg width="16" height="16" viewBox="0 0 16 16" fill="#fff"><path d="M0 2l7-1v6.500H0zM8 1l8-1v7.500H8zM0 8.500h7V15l-7-1zM8 8.500h8V16l-8-1z"/></svg></button>
        <button aria-label="Search"><svg width="16" height="16" viewBox="0 0 16 16" fill="none" stroke="#fff" stroke-width="1.300"><circle cx="10" cy="6" r="5"/><path d="M6.500 9.500L1 15"/></svg></button>
        <button aria-label="Task view"><svg width="17" height="16" viewBox="0 0 17 16" fill="none" stroke="#fff"><path d="M.5 0v2.500h10V0M.5 16v-2.500h10V16M.5 5.500h10v5H.5zM14.500 0v16"/><path d="M13 5h3v3h-3z" fill="#fff" stroke="none"/></svg></button>
        <button class="open" aria-label="File Explorer"><svg width="22" height="19" viewBox="0 0 22 19"><path d="M0 1h8l2 2h11v14H0z" fill="#f5c748"/><path d="M1 4h20v14H1z" fill="#fde08d"/><path d="M4 19v-8h14v8h-4v-4H8v4z" fill="#35a8e0"/></svg></button>
        <button class="open" aria-label="Chrome"><svg width="22" height="22" viewBox="0 0 22 22"><circle cx="11" cy="11" r="11" fill="#ffce44"/><path d="M1.500 5.500A11 11 0 0 1 20.500 5.500L11 6l-5 7z" fill="#dd4b3e"/><path d="M1.500 5.500A11 11 0 0 0 10.500 22L15.500 13.500 6.500 13.500z" fill="#1aa15f"/><circle cx="11" cy="11" r="5" fill="#fff"/><circle cx="11" cy="11" r="4" fill="#4a8af4"/></svg></button>
        <button class="open" aria-label="PDF reader"><svg width="24" height="24" viewBox="0 0 24 24"><path d="M0 0h18v5h6v19H0z" fill="#f78b1f"/><path d="M19 0l5 4h-5z" fill="#f78b1f"/><path d="M17 5C13 1 6 4 6 9s6 8 10 5l1-5h-5" fill="none" stroke="#fff" stroke-width="2.500"/><text x="7" y="22" class="pdf">PDF</text></svg></button>
        <button class="open current" aria-label="Revit"><svg width="24" height="24" viewBox="0 0 24 24"><path d="M0 0h24v24H0z" fill="#dce8f5"/><use href="#revit" x="5" y="3" width="15" height="18"/></svg></button>
        <div class="tray">
            <button aria-label="Hidden icons"><svg width="12" height="8" viewBox="0 0 12 8"><path d="M1 7l5-5 5 5" fill="none" stroke="#fff" stroke-width="1.300"/></svg></button>
            <button aria-label="Volume"><svg width="17" height="14" viewBox="0 0 17 14" fill="none" stroke="#fff"><path d="M1 5h2l4-4v12L3 9H1zM9 5q1 2 0 4M11 3q2 4 0 8"/><path d="M13 1q4 6 0 12" stroke="#777"/></svg></button>
            <button aria-label="Battery"><svg width="15" height="9" viewBox="0 0 15 9"><path d="M.5.500h12v8H.5zM13 3h1.500v3H13" fill="none" stroke="#fff"/><path d="M2 2h3v5H2z" fill="#fff"/></svg></button>
            <button aria-label="Network"><svg width="14" height="12" viewBox="0 0 14 12" fill="none" stroke="#fff"><path d="M1 11Q1 1 12 1M4 12Q4 4 13 4M7 12q0-5 6-5"/><circle cx="11" cy="10.500" r="1.500" fill="#fff" stroke="none"/></svg></button>
            <span class="lang">ENG<br>ST</span>
            <span class="clock">16:01<br>03.02.2019.</span>
            <button class="notify" aria-label="Notifications"><svg width="16" height="17" viewBox="0 0 16 17"><path d="M.5 1.500h15v11H11l-3 3-3-3H.5z" fill="none" stroke="#fff"/></svg></button>
        </div>
    </nav>
</body>
</html>
```
FILE: styles.css
```css
* {
    box-sizing: border-box;
}
body {
    margin: 0;
    height: 100vh;
    display: flex;
    flex-direction: column;
    overflow: hidden;
    background: #f0f0f0;
    color: #000;
    font-family: "Noto Sans", "Open Sans", sans-serif;
    font-size: 11px;
    line-height: 16px;
}
svg {
    display: block;
    flex: none;
}
.defs {
    position: absolute;
    width: 0;
    height: 0;
}
button {
    display: flex;
    align-items: center;
    justify-content: center;
    flex: none;
    margin: 0;
    padding: 0;
    border: 0;
    background: none;
    color: inherit;
    font: inherit;
}
select {
    width: 100%;
    height: 100%;
    padding: 0 3px;
    border: 0;
    background: none;
    color: inherit;
    font: inherit;
    appearance: none;
}
select:disabled {
    opacity: 1;
}
.combo {
    display: flex;
    align-items: center;
    padding-right: 4px;
    border: 1px solid #adadad;
    background: #e1e1e1;
    color: #000;
}
.combo svg {
    color: #555;
}

/* header */
.header {
    display: grid;
    grid-template-columns: 41px minmax(0, 1fr);
    grid-template-rows: 24px 20px;
    background: #a0a0a0;
}
.app-btn {
    grid-row: 1 / 3;
    width: 41px;
    height: 41px;
    gap: 1px;
    border: 1px solid #111;
    background: linear-gradient(#c5c5c5, #8b8b8b);
}
.titlebar {
    display: flex;
    background: #fff;
}
.quick-access, .infocenter {
    display: flex;
    flex: none;
    align-items: center;
    border-top: 1px solid #6a6a6a;
    border-bottom: 1px solid #6a6a6a;
    background: linear-gradient(#efefef, #b9b9b9);
}
.quick-access {
    padding-left: 5px;
    border-right: 1px solid #888;
}
.qa {
    width: 24px;
    height: 22px;
}
.qa-drop {
    width: 12px;
    height: 22px;
}
.qa-faded {
    display: flex;
    background: #ededed;
}
.qa-faded .qa-drop {
    opacity: .4;
}
.qa-gap {
    margin-left: 6px;
}
.qa-text {
    color: #3d424d;
    font-size: 18px;
    font-weight: bold;
}
.qa-on {
    border: 1px solid #1c6fc4;
    background: #b6d6f2;
}
.qa-sep {
    width: 1px;
    height: 18px;
    margin: 0 4px 0 3px;
    background: #a5a5a5;
}
.qa-more {
    width: 14px;
}
.window-title {
    flex: 1;
    min-width: 0;
    overflow: hidden;
    padding-left: 17px;
    line-height: 24px;
    white-space: nowrap;
}
.infocenter {
    width: 458px;
}
.info-toggle {
    width: 12px;
}
.search {
    width: 180px;
    height: 22px;
    padding: 0 2px;
    border: 1px solid #111;
    background: #fff;
    font: italic 11px "Noto Sans", sans-serif;
}
.search::placeholder {
    color: #777;
}
.user {
    gap: 5px;
    margin: 0 9px 0 4px;
    color: #000;
}
.help {
    width: 17px;
    height: 17px;
    margin: 0 3px 0 6px;
    border: 2px solid #4a4f5a;
    border-radius: 50%;
    background: #fff;
    color: #2558c0;
    font-size: 13px;
    font-weight: bold;
}
.window-btns {
    display: flex;
    flex: none;
    width: 163px;
    padding-left: 25px;
}
.window-btns button {
    width: 46px;
    height: 23px;
}
.tabs {
    display: flex;
    padding-left: 3px;
    align-items: stretch;
}
.tabs a {
    padding: 1px 10px 0 11px;
    color: #2d2d2d;
    line-height: 19px;
    text-decoration: none;
    white-space: nowrap;
}
.tabs .active {
    margin: 2px 0 0 1px;
    padding: 0 8px;
    border: 1px solid #6ee23c;
    border-bottom: 0;
    background: linear-gradient(#b4d6a2, #d5ecca);
    line-height: 16px;
}
.ribbon-toggle {
    margin-left: 22px;
}

/* ribbon */
.ribbon {
    display: flex;
    height: 95px;
    padding: 0 2px;
    border-top: 1px solid #5bc524;
    border-bottom: 1px solid #5bc524;
    background: linear-gradient(#d1e5c8, #8f8f8f);
    color: #333;
}
.panel {
    display: flex;
    flex-direction: column;
    border-right: 1px solid #d0d0d0;
    background: linear-gradient(#fff, #f8f8f8);
}
.panel-body {
    display: flex;
    flex: 1;
    padding-top: 2px;
}
.panel-body.col {
    flex-direction: column;
    align-items: center;
}
.panel-label {
    display: flex;
    align-items: center;
    justify-content: center;
    gap: 6px;
    height: 17px;
    padding-bottom: 2px;
    border-top: 1px solid #ddd;
    background: #eee;
}
.context .panel-label {
    background: linear-gradient(90deg, #c9e3bd, #dcefd4);
}
.w-select { width: 56px; }
.w-properties { width: 64px; }
.w-clipboard { width: 80px; }
.w-geometry { width: 144px; }
.w-modify { width: 238px; }
.w-view { width: 65px; }
.w-measure { width: 56px; }
.w-create { width: 82px; }
.w-crop { width: 43px; margin-left: 3px; }
.w-viewport { width: 57px; }
.big-btn {
    flex: 1;
    flex-direction: column;
    justify-content: flex-start;
    gap: 2px;
    height: 72px;
    padding-top: 3px;
    line-height: 15px;
}
.disabled {
    color: #aaa;
}
.modify-btn {
    gap: 7px;
    margin: 0 3px 0 6px;
    padding-top: 7px;
    border: 1px solid #1c6fc4;
    background: linear-gradient(#c4def5, #a9cdf0);
}
.w-properties .tool {
    width: 38px;
    height: 36px;
}
.w-properties .tool-on {
    height: 34px;
    border: 1px solid #1c6fc4;
    background: #b6d6f2;
}
.grid-small, .rows {
    display: grid;
    grid-template-rows: repeat(3, 24px);
}
.grid-small {
    width: 26px;
}
.rows {
    padding-left: 7px;
    width: 77px;
}
.row-btn {
    justify-content: flex-start;
    gap: 4px;
}
.row-btn svg:last-child:not(:first-child) {
    margin-left: 5px;
}
.row-btn.disabled svg:last-child {
    opacity: .5;
}
.icons-only {
    width: 38px;
    padding-left: 6px;
}
.icons-only .row-btn svg:last-child:not(:first-child) {
    margin-left: 2px;
}
.geo-last {
    width: 39px;
}
.geo-last .tool {
    justify-content: flex-start;
    padding-left: 5px;
}
.grid-big {
    display: grid;
    grid-template-columns: repeat(4, 39px);
    grid-template-rows: repeat(2, 36px);
    margin-left: 2px;
}
.grid-three {
    display: grid;
    grid-template-columns: repeat(3, 25px);
    grid-template-rows: repeat(3, 24px);
    margin-left: 2px;
}
.grid-create {
    display: grid;
    grid-template-columns: repeat(2, 38px);
    grid-template-rows: repeat(2, 36px);
    margin-left: 2px;
}
.wide-tool {
    gap: 7px;
    height: 36px;
}
.w-clipboard .big-btn {
    padding-left: 2px;
}

/* options bar */
.options-bar {
    display: flex;
    align-items: center;
    height: 27px;
    padding: 1px 9px 0;
    background: #d7e3cf;
}
.mode {
    width: 124px;
    margin-right: 9px;
    border-right: 1px solid #999;
    line-height: 21px;
}
.rotation {
    width: 133px;
    height: 20px;
    margin-left: 20px;
    border-color: #c8cdd0;
}

/* workspace */
.workspace {
    display: grid;
    grid-template-columns: 240px 1fr;
    gap: 5px;
    flex: 1;
    min-height: 0;
}
.side {
    display: flex;
    flex-direction: column;
    gap: 5px;
    min-height: 0;
}
.palette {
    display: flex;
    flex-direction: column;
}
.browser {
    flex: 1;
    min-height: 0;
}
.palette-title {
    display: flex;
    justify-content: space-between;
    height: 18px;
    margin: 0;
    padding: 0 6px 0 4px;
    background: #bfcddb;
    font-size: 11px;
    font-weight: normal;
    line-height: 19px;
    white-space: nowrap;
}
.palette-body {
    display: flex;
    flex-direction: column;
    flex: 1;
    min-height: 0;
    margin: 3px 1px 0 1px;
    border: 1px solid #777;
    border-right-color: #ddd;
    border-bottom-color: #ddd;
}
.type-selector {
    height: 72px;
    padding: 0 2px;
    border: 1px solid #c8c8c8;
    background: linear-gradient(#fff, #ececec);
    color: #333;
    text-align: left;
}
.thumb {
    width: 66px;
    height: 66px;
    border: 1px solid #ccc;
}
.type-name {
    flex: 1;
    padding-left: 4px;
}
.filter {
    display: flex;
    align-items: center;
    height: 24px;
}
.filter .combo {
    width: 154px;
    height: 22px;
}
.edit-type {
    gap: 4px;
    padding-left: 6px;
}
.scroll-area {
    display: grid;
    grid-template-columns: 1fr 16px;
    min-height: 0;
}
.props {
    width: 219px;
    border-collapse: collapse;
    table-layout: fixed;
    background: #fff;
}
.c-name { width: 103px; }
.c-value { width: 103px; }
.c-btn { width: 13px; }
.props tr {
    height: 18px;
}
.props .range {
    height: 17px;
}
.props td, .props th {
    overflow: hidden;
    padding: 0 2px;
    font-weight: normal;
    line-height: 16px;
    text-align: left;
    white-space: nowrap;
}
.props td {
    border-right: 1px dotted #888;
    border-bottom: 1px dotted #888;
}
.props td:first-child {
    padding-left: 8px;
}
.props .group {
    background: #dadada;
}
.props .group th:last-child {
    padding: 0;
}
.dim {
    color: #777;
}
input[type="checkbox"] {
    display: block;
    appearance: none;
    width: 13px;
    height: 13px;
    margin: 0 1px;
    border: 1px solid #333;
    background: #fff;
}
input[type="checkbox"]:checked::before {
    content: "";
    display: block;
    width: 8px;
    height: 4px;
    margin: 2px 1px;
    border: solid #333;
    border-width: 0 0 1px 1px;
    transform: rotate(-45deg);
}
.props .with-btn {
    padding: 0 1px;
}
.edit-btn {
    width: 100%;
    height: 15px;
    border: 1px solid #adadad;
    background: #e1e1e1;
}
.vscroll {
    display: flex;
    flex-direction: column;
    align-items: center;
    padding: 5px 0;
    background: #f0f0f0;
}
.vthumb {
    width: 15px;
    background: #cdcdcd;
}
.flip {
    margin-top: auto;
    transform: rotate(180deg);
}
.left {
    transform: rotate(-90deg);
}
.right {
    margin-left: auto;
    transform: rotate(90deg);
}
.props-thumb {
    height: 20px;
    margin-top: 58px;
}
.tree-thumb {
    height: 29px;
    margin-top: 128px;
}
.props-footer {
    display: flex;
    align-items: center;
    justify-content: space-between;
    height: 24px;
    padding: 0 1px 0 2px;
}
.props-footer a {
    color: #0066cc;
}
.props-footer button {
    width: 73px;
    height: 21px;
    border: 1px solid #bfbfbf;
    background: #ccc;
    color: #838383;
}

/* project browser */
.browser .scroll-area {
    flex: 1;
}
.tree {
    overflow: hidden;
    margin: 0;
    padding: 0 0 0 8px;
    background: #fff;
    list-style: none;
}
.tree li {
    display: flex;
    align-items: center;
    height: 18px;
    border-left: 1px dotted #888;
    white-space: nowrap;
}
.leaf::before {
    content: "";
    align-self: flex-start;
    width: 15px;
    height: 18px;
    margin: 0 2px 0 79px;
    border-left: 1px dotted #888;
    background: linear-gradient(90deg, #999 50%, transparent 50%) 0 9px / 2px 1px repeat-x;
}
.leaf.last::before {
    height: 10px;
}
.tree i {
    position: relative;
    flex: none;
    width: 9px;
    height: 9px;
    margin-right: 2px;
}
.top {
    background: repeating-linear-gradient(90deg, #999 0 1px, transparent 1px 2px) 0 9px / 10px 1px no-repeat;
}
.top svg {
    width: 16px;
    margin-right: 6px;
}
.tree .plus, .tree .minus {
    border: 1px solid #999;
    background: #fff;
}
.top .plus, .top .minus {
    margin-left: -5px;
    margin-right: 7px;
}
.plus::before, .minus::before {
    content: "";
    display: block;
    width: 5px;
    height: 1px;
    margin: 3px 1px;
    background: #2b4a90;
}
.plus::after {
    content: "";
    position: absolute;
    left: 3px;
    top: 1px;
    width: 1px;
    height: 5px;
    background: #2b4a90;
}
.sheet {
    padding-left: 15px;
    background: repeating-linear-gradient(90deg, #999 0 1px, transparent 1px 2px) 24px 9px / 10px 1px no-repeat;
    font-weight: bold;
}
.tree .sheet .plus {
    margin-right: 13px;
}
.hscroll, .view-controls {
    display: flex;
    align-items: center;
    background: #f0f0f0;
}
.hscroll {
    height: 16px;
    padding: 0 20px 0 4px;
}
.hthumb {
    width: 164px;
    height: 15px;
    margin-left: 3px;
    background: #cdcdcd;
}

/* sheet view */
.view {
    display: grid;
    grid-template-columns: 1fr 18px;
    grid-template-rows: 1fr 18px;
    min-height: 0;
    margin-bottom: 1px;
    border-top: 2px solid #777;
    border-left: 1px solid #777;
}
.canvas {
    position: relative;
    overflow: hidden;
    background: #fff;
}
.sheet-drawing {
    width: 100%;
    height: 100%;
    font-family: "Liberation Sans", sans-serif;
}
.line {
    fill: none;
    stroke: #000;
}
.boundary {
    fill: none;
    stroke: #f01010;
    stroke-dasharray: 5 3;
}
.room-tag {
    font-size: 6px;
    text-anchor: middle;
}
.room-tag path {
    fill: none;
    stroke: #000;
}
.block-head {
    font-size: 7px;
    text-anchor: middle;
}
.block-tiny {
    font-size: 4px;
    fill: #333;
}
.block-sign {
    font-size: 5px;
    font-weight: bold;
}
.block-text {
    font-size: 8px;
    text-anchor: middle;
}
.brand {
    font-family: "Lato", sans-serif;
    font-size: 11px;
    font-weight: bold;
}
.brand-url {
    font-size: 6px;
}
.mdi-btns {
    position: absolute;
    top: 7px;
    right: 4px;
    display: flex;
    gap: 5px;
}
.navbar {
    position: absolute;
    top: 28px;
    right: 1px;
    border: 1px solid #b0b0b0;
    border-radius: 6px;
    background: rgba(235, 235, 235, .6);
}
.nav-2d {
    fill: #6a9ad2;
    font-size: 9px;
    font-weight: bold;
}
.view-vscroll {
    padding: 5px 3px 5px 0;
}
.view-thumb {
    height: 17px;
    margin-top: 237px;
}
.view-controls {
    gap: 7px;
    padding: 0 4px 0 1px;
}
.view-hthumb {
    width: 17px;
    height: 15px;
    margin-left: 490px;
    background: #cdcdcd;
}
.view-controls .left {
    margin-left: 2px;
}
.grip {
    align-self: end;
    margin-left: 5px;
}

/* status bar */
.statusbar {
    display: flex;
    align-items: center;
    height: 24px;
    padding: 1px 67px 0 2px;
    border-top: 1px solid #888;
    background: linear-gradient(#e4e4e4, #c6c6c6);
    white-space: nowrap;
}
.status-text {
    width: 394px;
}
.sb {
    min-width: 24px;
    height: 21px;
    gap: 5px;
    background: #dcdcdc;
}
.statusbar .combo {
    height: 21px;
    border-color: #ddd;
    background: #fff;
}
.statusbar .combo svg {
    margin-top: 8px;
}
.workset {
    width: 206px;
    margin: 0 5px 0 4px;
}
.requests {
    width: 38px;
    margin-right: 14px;
}
.requests + .sb {
    margin-right: 2px;
}
.statusbar .model {
    width: 157px;
    margin-left: 2px;
    color: #888;
}
.editable {
    display: flex;
    align-items: center;
    gap: 2px;
    margin-left: auto;
}
.sel-tools {
    display: flex;
    gap: 2px;
    margin-left: 4px;
}
.filter-btn {
    gap: 2px;
}

/* taskbar */
.taskbar {
    display: flex;
    height: 40px;
    background: #090d14;
    color: #fff;
}
.taskbar > button {
    width: 48px;
}
.taskbar .open {
    width: 49px;
    border-bottom: 2px solid transparent;
    background: linear-gradient(#76b9ed, #76b9ed) center bottom / 40px 2px no-repeat border-box;
}
.taskbar .open:nth-child(4) {
    margin-left: 2px;
}
.taskbar .current {
    background: linear-gradient(#76b9ed, #76b9ed) center bottom / 49px 2px no-repeat border-box, #3b3f45;
}
.pdf {
    fill: #fff;
    font-size: 5px;
    font-weight: bold;
}
.tray {
    display: flex;
    align-items: center;
    margin-left: auto;
    margin-right: 4px;
    border-right: 1px solid #555;
    text-align: center;
}
.tray button {
    width: 24px;
}
.lang {
    width: 32px;
}
.clock {
    width: 74px;
}
.tray .notify {
    width: 38px;
    margin-right: 9px;
}
```
